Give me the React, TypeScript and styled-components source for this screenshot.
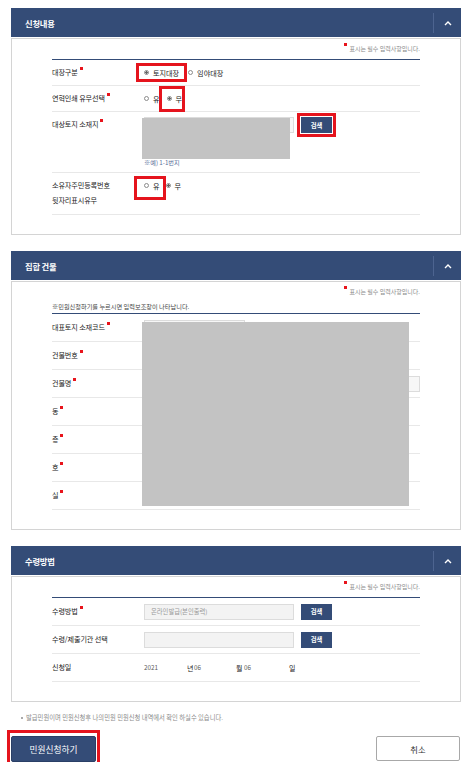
import { Fragment } from 'react';
import styled, { createGlobalStyle } from 'styled-components';

const NAVY = '#344c77';

const GlobalStyle = createGlobalStyle`
  html, body {
    margin: 0;
    padding: 0;
    overflow: hidden;
    background: #fff;
    font-family: "Noto Sans CJK KR", "Noto Sans", sans-serif;
    color: #333;
  }
`;

const Page = styled.div`
  width: 450px;
  padding: 8px 0 0 11px;
`;

const Section = styled.section`
  & + & {
    margin-top: 16px;
  }
`;

const SectionHeader = styled.div`
  height: 29px;
  background: ${NAVY};
  display: flex;
  align-items: center;
  justify-content: space-between;
  padding-left: 14px;
`;

const SectionTitle = styled.h2`
  margin: 0;
  font-size: 8.3px;
  font-weight: 700;
  color: #fff;
  letter-spacing: -0.2px;
`;

const ToggleButton = styled.button`
  width: 28px;
  height: 20px;
  padding: 0;
  border: 0;
  border-left: 1px solid #4d6490;
  background: transparent;
  display: flex;
  align-items: center;
  justify-content: center;
`;

const Card = styled.div`
  margin-top: 1px;
  border: 1px solid #d4d4d4;
  padding: 4px 40px 19px 40px;
`;

const RequiredNote = styled.div`
  height: 10px;
  line-height: 10px;
  margin-bottom: 6px;
  text-align: right;
  font-size: 6px;
  color: #8a8a8a;
`;

const RedMark = styled.i`
  display: inline-block;
  width: 3px;
  height: 3px;
  background: #e8141c;
  margin: 0 2px;
  vertical-align: 5px;
`;

const GuideText = styled.div`
  height: 11px;
  line-height: 10px;
  font-size: 6.2px;
  color: #444;
`;

const Table = styled.div`
  position: relative;
  border-top: 1px solid ${NAVY};
`;

const Row = styled.div<{ $h: number; $top?: number }>`
  box-sizing: border-box;
  height: ${p => p.$h}px;
  display: flex;
  align-items: ${p => (p.$top !== undefined ? 'flex-start' : 'center')};
  padding-top: ${p => p.$top ?? 0}px;
  border-bottom: 1px solid #e8e8e8;
`;

const Label = styled.div`
  width: 92px;
  flex: none;
  font-size: 7.1px;
  line-height: 15px;
  color: #222;
  letter-spacing: -0.1px;
`;

const Value = styled.div`
  flex: 1;
  display: flex;
  align-items: center;
  position: relative;
  font-size: 7px;
`;

const RadioGroup = styled.div<{ $gap: number }>`
  display: flex;
  align-items: center;
  gap: ${p => p.$gap}px;
`;

const RadioOption = styled.label`
  display: inline-flex;
  align-items: center;
  gap: 4px;
  height: 9px;
  font-size: 7.1px;
  color: #222;
`;

const RadioDot = styled.span<{ $checked?: boolean }>`
  box-sizing: border-box;
  width: 5px;
  height: 5px;
  border-radius: 50%;
  border: 1px solid #8c8c8c;
  background: ${p => (p.$checked ? 'radial-gradient(circle, #666 0 1.2px, #fff 1.4px)' : '#fff')};
`;

const Highlight = styled.span<{ $inset: string }>`
  position: relative;
  display: inline-flex;
  &::after {
    content: '';
    position: absolute;
    inset: ${p => p.$inset};
    border: 3px solid #e5141d;
    pointer-events: none;
  }
`;

const TextInput = styled.div<{ $w: number; $bg?: string }>`
  box-sizing: border-box;
  width: ${p => p.$w}px;
  height: 16px;
  line-height: 14px;
  padding-left: 6px;
  border: 1px solid #dcdcdc;
  background: ${p => p.$bg ?? '#f3f3f3'};
  font-size: 6.3px;
  color: #999;
`;

const SearchButton = styled.button`
  width: 31px;
  height: 16px;
  padding: 0;
  border: 0;
  background: ${NAVY};
  color: #fff;
  font-family: inherit;
  font-size: 6.3px;
  font-weight: 700;
`;

const InputRow = styled.div`
  display: flex;
  align-items: center;
  gap: 7px;
`;

const AddressBlock = styled.div`
  position: relative;
  display: flex;
  flex-direction: column;
`;

const Redacted = styled.div<{ $l: number; $t: number; $w: number; $h: number }>`
  position: absolute;
  left: ${p => p.$l}px;
  top: ${p => p.$t}px;
  width: ${p => p.$w}px;
  height: ${p => p.$h}px;
  background: #c3c3c3;
`;

const Hint = styled.div`
  margin-top: 25px;
  height: 10px;
  line-height: 10px;
  font-size: 6.2px;
  color: #5b6f9a;
`;

const DatePart = styled.span<{ $w: number; $dark?: boolean }>`
  display: inline-block;
  width: ${p => p.$w}px;
  font-size: ${p => (p.$dark ? 7 : 6.3)}px;
  color: ${p => (p.$dark ? '#222' : '#5a5a5a')};
`;

const FooterNote = styled.p`
  margin: 11px 0 0;
  padding-left: 10px;
  height: 10px;
  line-height: 10px;
  font-size: 6.3px;
  color: #8c8c8c;
  display: flex;
  align-items: center;
  gap: 3px;
`;

const Bullet = styled.i`
  width: 2px;
  height: 2px;
  background: #aaa;
`;

const ButtonBar = styled.div`
  margin-top: 13px;
  display: flex;
  justify-content: space-between;
  align-items: flex-start;
`;

const PrimaryButton = styled.button`
  width: 85px;
  height: 26px;
  padding: 0;
  border: 1px solid #2a3f66;
  border-radius: 2px;
  background: ${NAVY};
  color: #fff;
  font-family: inherit;
  font-size: 8.7px;
`;

const CancelButton = styled.button`
  width: 84px;
  height: 25px;
  margin-right: 1px;
  padding: 0;
  border: 1px solid #a8a8a8;
  border-radius: 2px;
  background: #fff;
  color: #333;
  font-family: inherit;
  font-size: 8.3px;
`;

const Chevron = () => (
  <svg width="8" height="6" viewBox="0 0 8 6">
    <polyline points="1,5 4,2 7,5" fill="none" stroke="#fff" strokeWidth="1.4" />
  </svg>
);

const Header = ({ title }: { title: string }) => (
  <SectionHeader>
    <SectionTitle>{title}</SectionTitle>
    <ToggleButton aria-label="접기">
      <Chevron />
    </ToggleButton>
  </SectionHeader>
);

const Note = () => (
  <RequiredNote>
    <RedMark />
    표시는 필수 입력사항입니다.
  </RequiredNote>
);

const Radio = ({ text, checked }: { text: string; checked?: boolean }) => (
  <RadioOption>
    <RadioDot $checked={checked} />
    {text}
  </RadioOption>
);

const buildingRows = [
  { label: '대표토지 소재코드', input: 101 },
  { label: '건물번호', input: 101 },
  { label: '건물명', input: 276 },
  { label: '동', input: 0 },
  { label: '층', input: 0 },
  { label: '호', input: 0 },
  { label: '실', input: 0 },
];

const App = () => {
  return (
    <Page>
      <GlobalStyle />

      <Section>
        <Header title="신청내용" />
        <Card>
          <Note />
          <Table>
            <Row $h={26}>
              <Label>
                대장구분
                <RedMark />
              </Label>
              <Value>
                <RadioGroup $gap={9}>
                  <Highlight $inset="-5px -8px -5px -8px">
                    <Radio text="토지대장" checked />
                  </Highlight>
                  <Radio text="임야대장" />
                </RadioGroup>
              </Value>
            </Row>
            <Row $h={26}>
              <Label>
                연혁인쇄 유무선택
                <RedMark />
              </Label>
              <Value>
                <RadioGroup $gap={7}>
                  <Radio text="유" />
                  <Highlight $inset="-8px -3px -9px -8px">
                    <Radio text="무" checked />
                  </Highlight>
                </RadioGroup>
              </Value>
            </Row>
            <Row $h={61} $top={5}>
              <Label>
                대상토지 소재지
                <RedMark />
              </Label>
              <Value>
                <AddressBlock>
                  <InputRow>
                    <TextInput $w={150} $bg="#f7f7f7" />
                    <Highlight $inset="-4px">
                      <SearchButton>검색</SearchButton>
                    </Highlight>
                  </InputRow>
                  <Redacted $l={-2} $t={1} $w={148} $h={41} />
                  <Hint>※예) 1-1번지</Hint>
                </AddressBlock>
              </Value>
            </Row>
            <Row $h={42} $top={5}>
              <Label>
                소유자주민등록번호
                <br />
                뒷자리표시유무
              </Label>
              <Value style={{ height: 15 }}>
                <RadioGroup $gap={6}>
                  <Highlight $inset="-5px -6px -10px -10px">
                    <Radio text="유" />
                  </Highlight>
                  <Radio text="무" checked />
                </RadioGroup>
              </Value>
            </Row>
          </Table>
        </Card>
      </Section>

      <Section>
        <Header title="집합 건물" />
        <Card>
          <Note />
          <GuideText>※민원신청하기를 누르시면 입력보조창이 나타납니다.</GuideText>
          <Table>
            {buildingRows.map(r => (
              <Fragment key={r.label}>
                <Row $h={28}>
                  <Label>
                    {r.label}
                    <RedMark />
                  </Label>
                  <Value>{r.input > 0 && <TextInput $w={r.input} $bg="#f7f7f7" />}</Value>
                </Row>
              </Fragment>
            ))}
            <Redacted $l={90} $t={8} $w={267} $h={184} />
          </Table>
        </Card>
      </Section>

      <Section>
        <Header title="수령방법" />
        <Card>
          <Note />
          <Table>
            <Row $h={28}>
              <Label>
                수령방법
                <RedMark />
              </Label>
              <Value>
                <InputRow>
                  <TextInput $w={150}>온라인발급(본인출력)</TextInput>
                  <SearchButton>검색</SearchButton>
                </InputRow>
              </Value>
            </Row>
            <Row $h={28}>
              <Label>수령/제출기관 선택</Label>
              <Value>
                <InputRow>
                  <TextInput $w={150} />
                  <SearchButton>검색</SearchButton>
                </InputRow>
              </Value>
            </Row>
            <Row $h={28}>
              <Label>신청일</Label>
              <Value>
                <DatePart $w={43}>2021</DatePart>
                <DatePart $w={7} $dark>년</DatePart>
                <DatePart $w={42}>06</DatePart>
                <DatePart $w={8} $dark>월</DatePart>
                <DatePart $w={45}>06</DatePart>
                <DatePart $w={8} $dark>일</DatePart>
              </Value>
            </Row>
          </Table>
        </Card>
      </Section>

      <FooterNote>
        <Bullet />
        발급민원이며 민원신청후 나의민원 민원신청 내역에서 확인 하실수 있습니다.
      </FooterNote>

      <ButtonBar>
        <Highlight $inset="-6px -4px -6px -4px">
          <PrimaryButton>민원신청하기</PrimaryButton>
        </Highlight>
        <CancelButton>취소</CancelButton>
      </ButtonBar>
    </Page>
  );
};

export default App;
